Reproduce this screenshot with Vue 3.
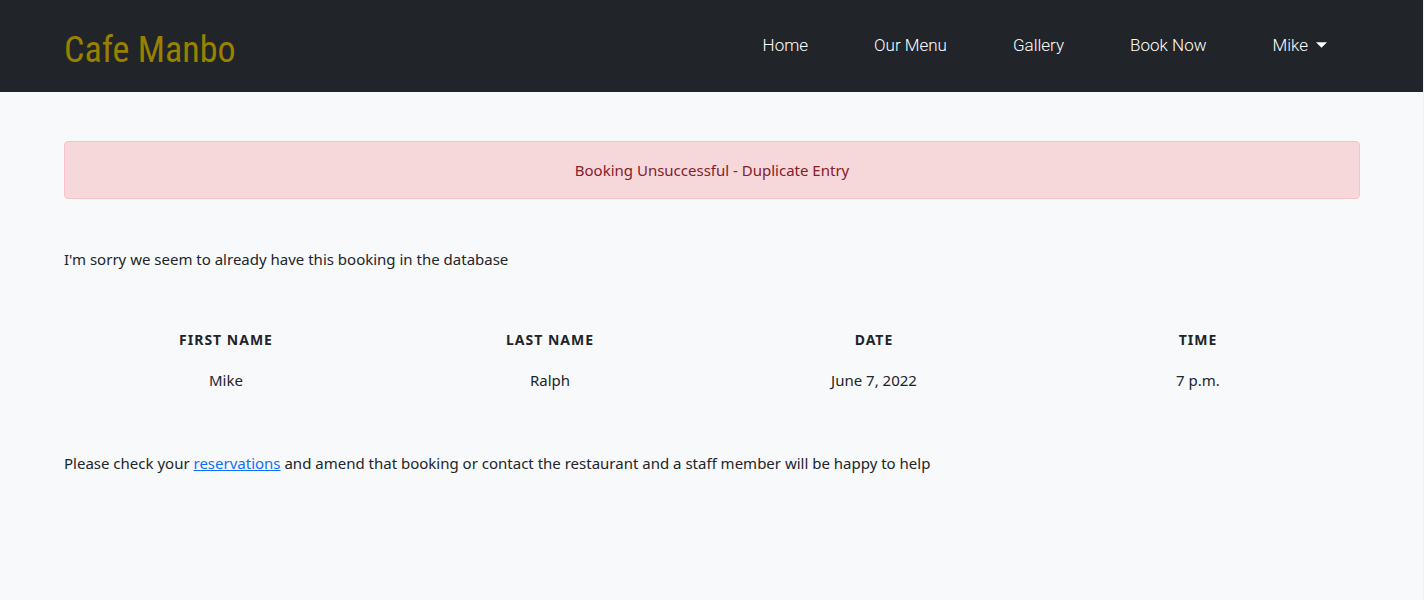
<script setup>
const links = ['Home', 'Our Menu', 'Gallery', 'Book Now']
const columns = ['First name', 'Last name', 'Date', 'Time']
const booking = ['Mike', 'Ralph', 'June 7, 2022', '7 p.m.']
</script>

<template>
  <div class="page">
    <header class="navbar">
      <a class="brand" href="#">Cafe Manbo</a>
      <nav class="nav">
        <a v-for="link in links" :key="link" class="nav-link" href="#">{{ link }}</a>
        <button class="nav-link user" type="button" aria-haspopup="true">
          Mike
          <svg class="caret" viewBox="0 0 10 5" aria-hidden="true"><path d="M0 0H10L5 5Z" /></svg>
        </button>
      </nav>
    </header>
    <main class="content">
      <div class="alert" role="alert">Booking Unsuccessful - Duplicate Entry</div>
      <p class="message">I'm sorry we seem to already have this booking in the database</p>
      <table class="booking">
        <thead>
          <tr><th v-for="column in columns" :key="column" scope="col">{{ column }}</th></tr>
        </thead>
        <tbody>
          <tr><td v-for="value in booking" :key="value">{{ value }}</td></tr>
        </tbody>
      </table>
      <p class="help">Please check your <a href="#">reservations</a> and amend that booking or contact the restaurant and a staff member will be happy to help</p>
    </main>
  </div>
</template>

<style>
body {
  background: #f8f9fa;
}
</style>

<style scoped>
.page {
  min-height: 100vh;
  box-sizing: border-box;
  border-right: 1px solid #f0f1f2;
  background: #f8f9fb;
  color: #212529;
  font: 400 15px/24px "Noto Sans", "Open Sans", sans-serif;
}
.navbar {
  display: flex;
  align-items: center;
  justify-content: space-between;
  min-height: 92px;
  padding: 0 63px 0 64px;
  box-sizing: border-box;
  background: #212529;
}
.brand {
  padding-top: 8px;
  color: #998100;
  font: 400 36px/60px "Roboto Condensed", "Liberation Sans Narrow", "Liberation Sans", sans-serif;
  text-decoration: none;
}
.nav {
  display: flex;
  align-items: center;
  padding-bottom: 2px;
}
.nav-link {
  padding: 0 33px;
  border: 0;
  background: none;
  color: #fff;
  font: 300 17px/24px Roboto, sans-serif;
  text-decoration: none;
}
.user {
  display: flex;
  align-items: center;
  gap: 8px;
  cursor: pointer;
}
.caret {
  width: 11px;
  height: 6px;
  fill: #fff;
}
.content {
  padding: 49px 63px 64px 64px;
}
.alert {
  padding: 16px;
  border: 1px solid #f5c2c7;
  border-radius: 4px;
  background: #f6d7da;
  color: #842029;
  text-align: center;
}
.message {
  margin: 48px 0;
}
.booking {
  width: 100%;
  table-layout: fixed;
  border-collapse: collapse;
  text-align: center;
}
.booking th {
  padding: 9px 8px 8px;
  font-size: 14px;
  font-weight: 700;
  letter-spacing: 1px;
  text-transform: uppercase;
}
.booking td {
  padding: 8px;
}
.help {
  margin: 51px 0 0;
}
.help a {
  color: #0d6efd;
}
</style>
